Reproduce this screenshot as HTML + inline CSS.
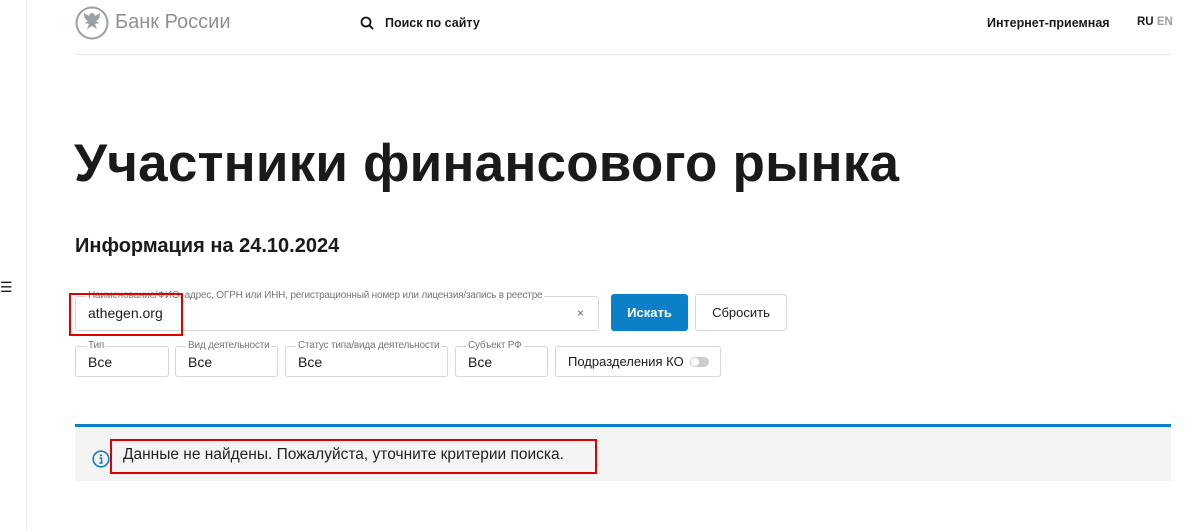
<!DOCTYPE html>
<html><head><meta charset="utf-8"><style>
*{box-sizing:border-box;margin:0;padding:0}
body{width:1200px;height:531px;background:#fff;font-family:"Liberation Sans",sans-serif;color:#1a1a1a;position:relative;overflow:hidden}
.a{position:absolute}
.fld{position:absolute;border:1px solid #d6d6d6;border-radius:3px;background:#fff}
.lbl{position:absolute;top:-7px;left:10px;background:#fff;font-size:10px;color:#777;padding:0 2px;white-space:nowrap;letter-spacing:-0.2px}
.val{position:absolute;left:12px;top:8px;font-size:14px}
.red{position:absolute;border:2px solid #e00000}
</style></head><body>
<div class="a" style="left:26px;top:0;width:1px;height:531px;background:#eee"></div>
<div class="a" style="left:0;top:279px;font-size:14px">☰</div>
<svg class="a" style="left:75px;top:6px" width="34" height="34" viewBox="0 0 34 34"><circle cx="17" cy="17" r="15.5" fill="none" stroke="#9aa0a8" stroke-width="2"/><path d="M17 7c-2 0-3 2-3 3l-5-3c0 4 1 7 4 8l-3 2 4 1-2 5 5-3 5 3-2-5 4-1-3-2c3-1 4-4 4-8l-5 3c0-1-1-3-3-3z" fill="#9aa0a8"/></svg>
<div class="a" style="left:115px;top:11px;font-size:20px;color:#8b9099">Банк России</div>
<svg class="a" style="left:360px;top:16px" width="14" height="14" viewBox="0 0 14 14"><circle cx="6" cy="6" r="4.5" fill="none" stroke="#111" stroke-width="1.8"/><path d="M9.3 9.3L13 13" stroke="#111" stroke-width="1.8"/></svg>
<div class="a" style="left:385px;top:16px;font-size:12.5px;font-weight:bold">Поиск по сайту</div>
<div class="a" style="left:987px;top:16px;font-size:12.5px;font-weight:bold">Интернет-приемная</div>
<div class="a" style="left:1137px;top:16px;font-size:11.5px;font-weight:bold">RU <span style="color:#9aa0a8">EN</span></div>
<div class="a" style="left:75px;top:54px;width:1096px;height:1px;background:#e8e8e8"></div>
<div class="a" style="left:74px;top:133px;font-size:53px;font-weight:bold;letter-spacing:0.2px">Участники финансового рынка</div>
<div class="a" style="left:75px;top:235px;font-size:20px;font-weight:bold">Информация на 24.10.2024</div>
<div class="fld" style="left:75px;top:296px;width:524px;height:35px"><div class="lbl">Наименование/ФИО, адрес, ОГРН или ИНН, регистрационный номер или лицензия/запись в реестре</div><div class="val">athegen.org</div><div class="a" style="right:14px;top:9px;font-size:12px;color:#666">×</div></div>
<div class="red" style="left:69px;top:293px;width:114px;height:43px"></div>
<div class="a" style="left:611px;top:294px;width:77px;height:37px;background:#0b7fc7;border-radius:3px;color:#fff;font-size:13px;font-weight:bold;text-align:center;line-height:37px">Искать</div>
<div class="a" style="left:695px;top:294px;width:92px;height:37px;border:1px solid #d6d6d6;border-radius:3px;font-size:13px;text-align:center;line-height:35px">Сбросить</div>
<div class="fld" style="left:75px;top:346px;width:94px;height:31px"><div class="lbl">Тип</div><div class="val" style="top:7px">Все</div></div>
<div class="fld" style="left:175px;top:346px;width:103px;height:31px"><div class="lbl">Вид деятельности</div><div class="val" style="top:7px">Все</div></div>
<div class="fld" style="left:285px;top:346px;width:163px;height:31px"><div class="lbl">Статус типа/вида деятельности</div><div class="val" style="top:7px">Все</div></div>
<div class="fld" style="left:455px;top:346px;width:93px;height:31px"><div class="lbl">Субъект РФ</div><div class="val" style="top:7px">Все</div></div>
<div class="fld" style="left:555px;top:346px;width:166px;height:31px"><div class="val" style="top:7px;font-size:13px">Подразделения КО</div><div class="a" style="left:134px;top:10px;width:19px;height:10px;border-radius:5px;background:#ccc"><div class="a" style="left:1px;top:1px;width:8px;height:8px;border-radius:4px;background:#fff"></div></div></div>
<div class="a" style="left:75px;top:424px;width:1096px;height:57px;background:#f4f4f5;border-top:3px solid #0b7fc7"></div>
<svg class="a" style="left:92px;top:450px" width="18" height="18" viewBox="0 0 18 18"><circle cx="9" cy="9" r="7.8" fill="none" stroke="#0b7fc7" stroke-width="1.6"/><circle cx="9" cy="5.3" r="1.1" fill="#0b7fc7"/><path d="M7.5 8h2v5M7.3 13h3.4" stroke="#0b7fc7" stroke-width="1.5" fill="none"/></svg>
<div class="red" style="left:110px;top:439px;width:487px;height:35px"></div>
<div class="a" style="left:123px;top:446px;font-size:15.5px;color:#222">Данные не найдены. Пожалуйста, уточните критерии поиска.</div>
</body></html>
